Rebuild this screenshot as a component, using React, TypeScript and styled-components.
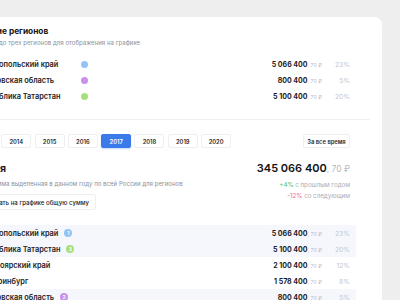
import React from "react";
import styled, { createGlobalStyle } from "styled-components";

const GlobalStyle = createGlobalStyle`
  html, body { margin: 0; padding: 0; background: #eeeeee; }
  body { font-family: Inter, "Noto Sans", sans-serif; overflow: hidden; -webkit-font-smoothing: antialiased; }
  * { box-sizing: border-box; }
`;

const Page = styled.div`
  width: 400px;
  height: 300px;
  overflow: hidden;
  padding-top: 17px;
`;

const Card = styled.div`
  margin-left: -52px;
  width: 434px;
  min-height: 320px;
  background: #ffffff;
  border-radius: 8px;
  padding: 9px 32px 0 20px;
`;

const Heading = styled.div`
  margin-left: -7.5px;
  font-size: 8.3px;
  line-height: 11px;
  font-weight: 700;
  color: #141418;
`;

const Hint = styled.div<{ $mt?: number }>`
  margin-top: ${(p) => p.$mt ?? 1}px;
  font-size: 6.1px;
  line-height: 10px;
  color: #8d9099;
  white-space: nowrap;
`;

const List = styled.div`
  margin-top: 8px;
`;

const Row = styled.div<{ $hl?: boolean }>`
  display: flex;
  align-items: center;
  height: 16px;
  padding-left: 9px;
  background: ${(p) => (p.$hl ? "#f5f7fc" : "transparent")};
`;

const TableRow = styled(Row)`
  margin-right: -6px;
  padding-right: 6px;
`;

const Name = styled.div<{ $w?: number }>`
  font-size: 7.4px;
  font-weight: 600;
  color: #232327;
  white-space: nowrap;
  ${(p) => (p.$w ? `width: ${p.$w}px; flex: none;` : "")}
`;

const Dot = styled.span<{ $c: string }>`
  width: 7px;
  height: 7px;
  border-radius: 50%;
  background: ${(p) => p.$c};
  flex: none;
`;

const Badge = styled.span<{ $c: string }>`
  margin-left: 6px;
  width: 8px;
  height: 8px;
  border-radius: 50%;
  background: ${(p) => p.$c};
  color: #ffffff;
  font-size: 5px;
  font-weight: 700;
  display: inline-flex;
  align-items: center;
  justify-content: center;
  flex: none;
`;

const Value = styled.div`
  margin-left: auto;
  font-size: 7px;
  font-weight: 700;
  color: #1b1b1f;
  white-space: nowrap;
`;

const Cents = styled.span`
  font-size: 5.3px;
  font-weight: 400;
  color: #b9bcc5;
`;

const Percent = styled.div`
  width: 28px;
  text-align: right;
  font-size: 6.8px;
  color: #c4c7ce;
`;

const Divider = styled.div`
  margin-top: 15px;
  height: 1px;
  background: #f0f0f2;
  margin-right: -20px;
`;

const Years = styled.div`
  margin-top: 14px;
  display: flex;
  gap: 3.3px;
`;

const YearButton = styled.button<{ $active?: boolean; $wide?: boolean }>`
  height: 14px;
  width: ${(p) => (p.$wide ? "47px" : "30px")};
  margin-left: ${(p) => (p.$wide ? "auto" : "0")};
  padding: 0;
  border: 1px solid ${(p) => (p.$active ? "#3b7be9" : "#efeff1")};
  border-radius: 2px;
  background: ${(p) => (p.$active ? "#3b7be9" : "#ffffff")};
  color: ${(p) => (p.$active ? "#ffffff" : "#2a2a2e")};
  font-family: Inter, "Noto Sans", sans-serif;
  font-size: 5.8px;
  font-weight: 600;
  box-shadow: ${(p) => (p.$active ? "0 1px 2px rgba(59,123,233,0.3)" : "none")};
`;

const Summary = styled.div`
  margin-top: 12px;
  display: flex;
  justify-content: space-between;
  align-items: flex-start;
`;

const LeftCol = styled.div`
  display: flex;
  flex-direction: column;
  align-items: flex-start;
`;

const BigTitle = styled.div`
  font-size: 10.5px;
  line-height: 18px;
  font-weight: 700;
  color: #1b1b1f;
`;

const OutlineButton = styled.button`
  margin-top: 5px;
  height: 16px;
  padding: 0 6px 0 12px;
  border: 1px solid #efeff1;
  border-radius: 2px;
  background: #ffffff;
  font-family: Inter, "Noto Sans", sans-serif;
  font-size: 6.1px;
  font-weight: 500;
  color: #232327;
`;

const RightCol = styled.div`
  display: flex;
  flex-direction: column;
  align-items: flex-end;
`;

const Total = styled.div`
  font-size: 11px;
  line-height: 16px;
  font-weight: 600;
  color: #111114;
  white-space: nowrap;
`;

const TotalCents = styled.span`
  font-weight: 400;
  color: #b4b7c0;
  font-size: 8.5px;
`;

const Change = styled.div<{ $mt: number }>`
  margin-top: ${(p) => p.$mt}px;
  font-size: 6.2px;
  line-height: 10px;
  color: #a9acb5;
`;

const Delta = styled.span<{ $c: string }>`
  color: ${(p) => p.$c};
`;

const Table = styled.div`
  margin-top: 15px;
`;

const BLUE = "#8fc4f5";
const PURPLE = "#c891ee";
const GREEN = "#a7df79";

const top = [
  { name: "Ставропольский край", c: BLUE, v: "5 066 400", p: "23%" },
  { name: "Московская область", c: PURPLE, v: "800 400", p: "5%" },
  { name: "Республика Татарстан", c: GREEN, v: "5 100 400", p: "20%" },
];

const table = [
  { name: "Ставропольский край", b: { n: "1", c: BLUE }, v: "5 066 400", p: "23%" },
  { name: "Республика Татарстан", b: { n: "3", c: GREEN }, v: "5 100 400", p: "20%" },
  { name: "Красноярский край", v: "2 100 400", p: "12%" },
  { name: "Екатеринбург", v: "1 578 400", p: "8%" },
  { name: "Московская область", b: { n: "2", c: PURPLE }, v: "800 400", p: "5%" },
];

const years = ["2013", "2014", "2015", "2016", "2017", "2018", "2019", "2020"];

export default function App() {
  return (
    <>
      <GlobalStyle />
      <Page>
        <Card>
          <Heading>Сравнение регионов</Heading>
          <Hint>Выберите до трех регионов для отображения на графике</Hint>
          <List>
            {top.map((r) => (
              <Row key={r.name}>
                <Name $w={103.5}>{r.name}</Name>
                <Dot $c={r.c} />
                <Value>
                  {r.v}
                  <Cents>, 70 ₽</Cents>
                </Value>
                <Percent>{r.p}</Percent>
              </Row>
            ))}
          </List>
          <Divider />
          <Years>
            {years.map((y) => (
              <YearButton key={y} $active={y === "2017"}>
                {y}
              </YearButton>
            ))}
            <YearButton $wide>За все время</YearButton>
          </Years>
          <Summary>
            <LeftCol>
              <BigTitle>Россия</BigTitle>
              <Hint>Общая сумма выделенная в данном году по всей России для регионов</Hint>
              <OutlineButton>Показать на графике общую сумму</OutlineButton>
            </LeftCol>
            <RightCol>
              <Total>
                345 066 400<TotalCents>, 70 ₽</TotalCents>
              </Total>
              <Change $mt={3}>
                <Delta $c="#4cc27a">+4%</Delta> с прошлым годом
              </Change>
              <Change $mt={1}>
                <Delta $c="#f06b8b">-12%</Delta> со следующим
              </Change>
            </RightCol>
          </Summary>
          <Table>
            {table.map((r) => (
              <TableRow key={r.name} $hl={!!r.b}>
                <Name>{r.name}</Name>
                {r.b && <Badge $c={r.b.c}>{r.b.n}</Badge>}
                <Value>
                  {r.v}
                  <Cents>, 70 ₽</Cents>
                </Value>
                <Percent>{r.p}</Percent>
              </TableRow>
            ))}
          </Table>
        </Card>
      </Page>
    </>
  );
}
